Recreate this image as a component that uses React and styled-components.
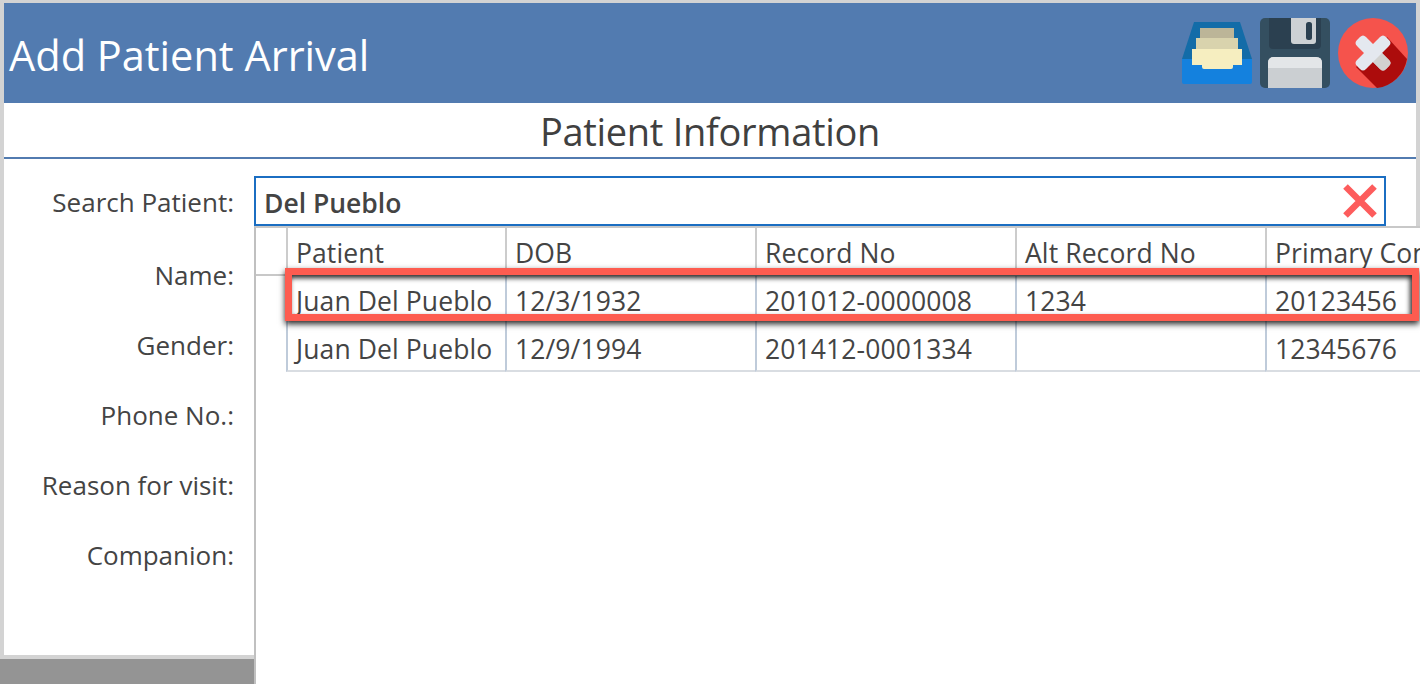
import styled, { createGlobalStyle } from "styled-components";

const GlobalStyle = createGlobalStyle`
html, body {
  margin: 0;
  padding: 0;
  overflow: hidden;
}
* {
  box-sizing: border-box;
}
`

const Page = styled.div`
position: relative;
width: 1420px;
height: 684px;
overflow: hidden;
background: #d3d3d3;
padding: 3px 4px 0;
font-family: "Open Sans", "Noto Sans", sans-serif;
color: #444444;
display: flex;
flex-direction: column;
`
const Header = styled.div`
height: 100px;
flex-shrink: 0;
background: #527bb0;
display: flex;
align-items: center;
justify-content: space-between;
padding: 0 8px 0 5px;
`
const Heading = styled.div`
color: #ffffff;
font-size: 41.5px;
padding-top: 3px;
`
const Actions = styled.div`
display: flex;
align-items: center;
gap: 8px;
`
const Dialog = styled.div`
background: #ffffff;
height: 552px;
flex-shrink: 0;
`
const Section = styled.div`
height: 56px;
border-bottom: 2px solid #527bb0;
display: flex;
align-items: center;
justify-content: center;
font-size: 38px;
letter-spacing: -0.3px;
color: #404040;
padding-top: 1px;
`
const Form = styled.div`
width: 250px;
padding-top: 17px;
display: flex;
flex-direction: column;
`
const Fields = styled.div`
padding-top: 11px;
`
const Label = styled.div`
height: ${p => p.$h}px;
display: flex;
align-items: center;
justify-content: flex-end;
padding: 0 20px 2px 0;
font-size: 26px;
white-space: nowrap;
`
const StatusBar = styled.div`
width: 254px;
flex: 1;
margin: 4px 0 0 -4px;
background: #949494;
`
const SearchBox = styled.div`
position: absolute;
left: 254px;
top: 176px;
width: 1132px;
height: 50px;
background: #ffffff;
border: 2px solid #1b6ec2;
display: flex;
align-items: center;
justify-content: space-between;
padding: 0 7px 0 8px;
font-size: 26.5px;
font-weight: 600;
line-height: 38px;
`
const SearchText = styled.span`
padding-top: 3px;
`
const Popup = styled.div`
position: absolute;
left: 254px;
top: 226px;
right: 0;
bottom: 0;
background: #ffffff;
border-top: 2px solid #c8c8c8;
border-left: 2px solid #c0c0c0;
overflow: hidden;
`
const Grid = styled.div`
display: grid;
grid-template-columns: 30px 219px 250px 260px 250px 200px;
grid-auto-rows: 48px;
width: 1210px;
`
const Corner = styled.div`
border-bottom: 2px solid #c8c8c8;
height: 48px;
`
const Blank = styled.div``
const Cell = styled.div`
border-left: 2px solid ${p => (p.$head ? "#cccccc" : "#bfcbda")};
border-bottom: ${p => (p.$last ? "2px solid #d9dde2" : "none")};
height: ${p => (p.$head ? 47 : 48)}px;
padding: 6px 0 0 8px;
font-size: 26.5px;
letter-spacing: 0.1px;
line-height: 38px;
white-space: nowrap;
overflow: hidden;
`
const Highlight = styled.div`
position: absolute;
left: 285px;
top: 268px;
width: 1134px;
height: 53px;
border: 7px solid #fd5c50;
box-shadow: 0 3px 6px rgba(0, 0, 0, 0.85), inset -2px 3px 5px rgba(0, 0, 0, 0.85);
`

const columns = ["Patient", "DOB", "Record No", "Alt Record No", "Primary Contact"]
const patients = [
  ["Juan Del Pueblo", "12/3/1932", "201012-0000008", "1234", "20123456"],
  ["Juan Del Pueblo", "12/9/1994", "201412-0001334", "", "12345676"],
]
const fields = ["Name:", "Gender:", "Phone No.:", "Reason for visit:", "Companion:"]

function ArchiveIcon() {
  return <svg width="70" height="70" viewBox="0 0 70 70">
    <path d="M12 4H58L70 41V62H0V41Z" fill="#136ca8" />
    <rect x="18" y="10" width="34" height="11" fill="#bcb598" />
    <rect x="14" y="20" width="42" height="11" fill="#d9d3ad" />
    <path d="M0 41H10V47H15V62H55V47H60V41H70V64Q70 66 68 66H2Q0 66 0 64Z" fill="#1481de" />
    <rect x="10" y="60" width="50" height="6" fill="#1481de" />
    <rect x="15" y="47" width="40" height="14" fill="#1481de" />
    <path d="M10 31H60V47H51V49Q51 51 49 51H22Q20 51 20 49V47H10Z" fill="#f6eec0" />
  </svg>
}

function SaveIcon() {
  return <svg width="70" height="70" viewBox="0 0 70 70">
    <rect width="70" height="70" rx="5" fill="#344f60" />
    <path d="M9 0H61V27Q61 31 57 31H13Q9 31 9 27Z" fill="#2b4050" />
    <path d="M31 0H56V23Q56 26 53 26H34Q31 26 31 23Z" fill="#cdd1d4" />
    <rect x="46" y="4" width="6" height="18" rx="2.5" fill="#2b4050" />
    <path d="M8 70V45Q8 39 14 39H56Q62 39 62 45V70Z" fill="#cbcfd2" />
    <path d="M8 50V45Q8 39 14 39H56Q62 39 62 45V50Z" fill="#e3e6e8" />
  </svg>
}

function CloseIcon() {
  return <svg width="70" height="70" viewBox="0 0 70 70">
    <circle cx="35" cy="35" r="35" fill="#f5534c" />
    <path d="M49 19L69 41A35 35 0 0 1 39 70L18 49Z" fill="#ac0c0c" />
    <path d="M19 22L22 19Q25 16 28 19L35 26L42 19Q45 16 48 19L51 22Q54 25 51 28L44 35L51 42Q54 45 51 48L48 51Q45 54 42 51L35 44L28 51Q25 54 22 51L19 48Q16 45 19 42L26 35L19 28Q16 25 19 22Z" fill="#e4e8ef" />
    <path d="M35 44L44 35L51 42Q54 45 51 48L48 51Q45 54 42 51Z" fill="#d2d2d0" />
  </svg>
}

function ClearIcon() {
  return <svg width="34" height="34" viewBox="0 0 34 34" style={{ display: "block" }}>
    <path d="M2.5 2.5L31.5 31.5M31.5 2.5L2.5 31.5" stroke="#fd5c5c" strokeWidth="6.5" />
  </svg>
}

export default function App() {
  return <Page>
    <GlobalStyle />
    <Header>
      <Heading>Add Patient Arrival</Heading>
      <Actions>
        <ArchiveIcon />
        <SaveIcon />
        <CloseIcon />
      </Actions>
    </Header>
    <Dialog>
      <Section>Patient Information</Section>
      <Form>
        <Label $h={54}>Search Patient:</Label>
        <Fields>
          {fields.map(text => <Label key={text} $h={70}>{text}</Label>)}
        </Fields>
      </Form>
    </Dialog>
    <StatusBar />
    <SearchBox>
      <SearchText>Del Pueblo</SearchText>
      <ClearIcon />
    </SearchBox>
    <Popup>
      <Grid>
        <Corner />
        {columns.map(c => <Cell key={c} $head>{c}</Cell>)}
        {patients.map((row, i) => [
          <Blank key={"b" + i} />,
          ...row.map((v, j) => <Cell key={i + "-" + j} $last={i === patients.length - 1}>{v}</Cell>),
        ])}
      </Grid>
    </Popup>
    <Highlight />
  </Page>
}
